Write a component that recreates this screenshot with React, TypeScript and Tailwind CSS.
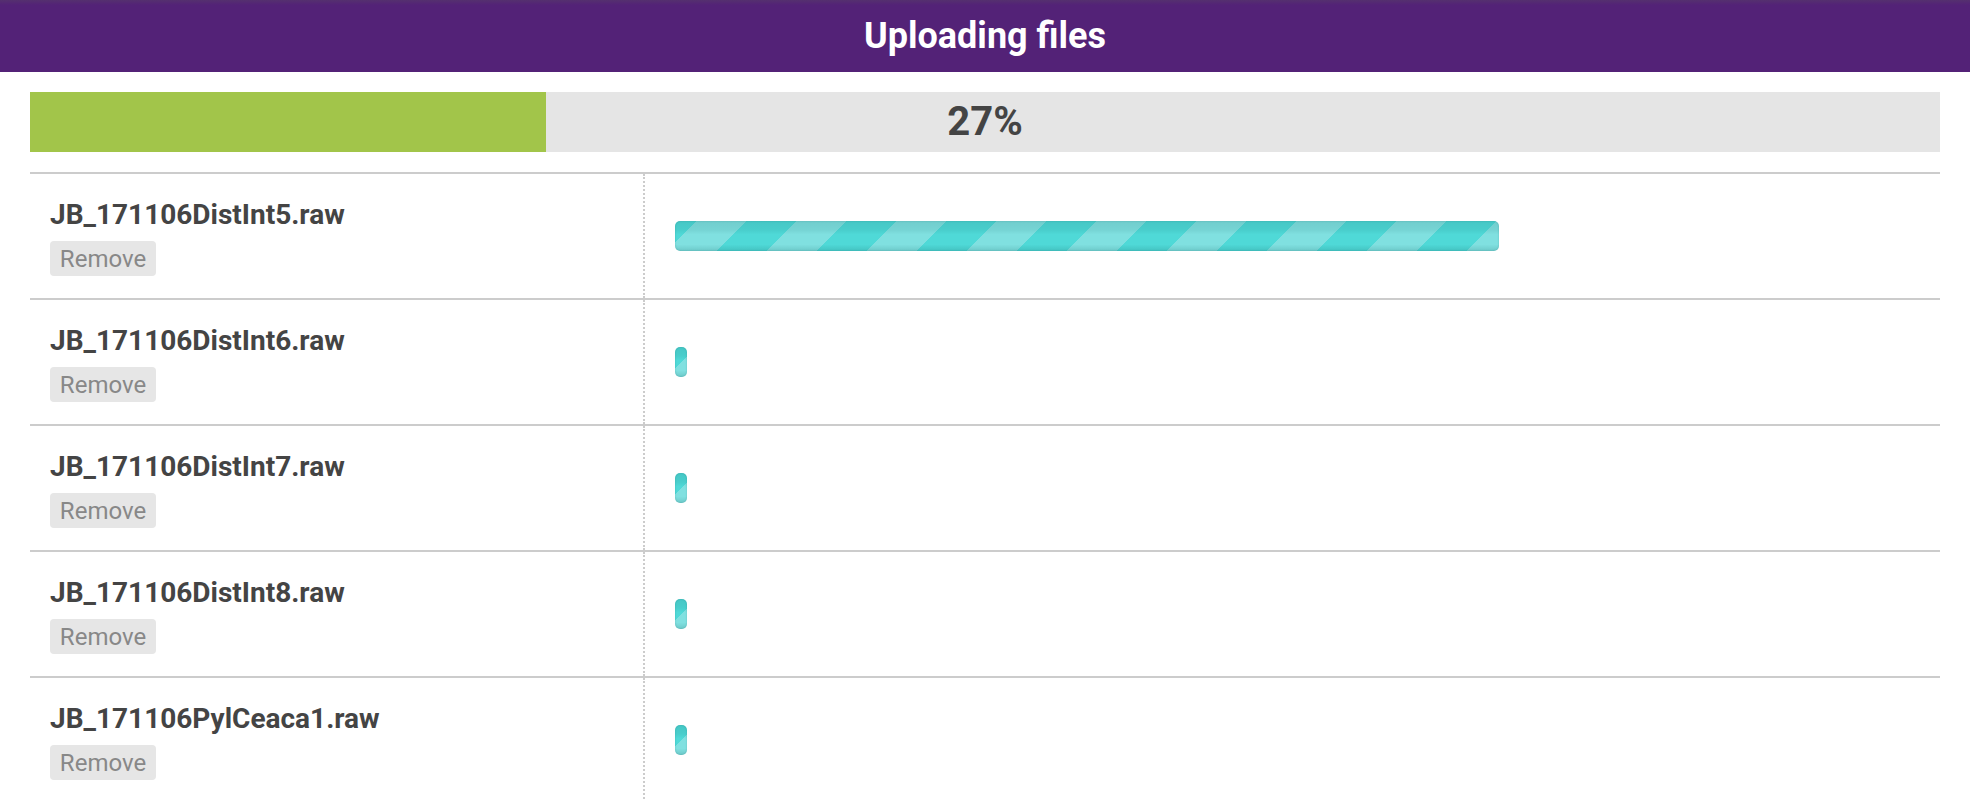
import React from "react";

const files = [
  { name: "JB_171106DistInt5.raw", progress: 66.7 },
  { name: "JB_171106DistInt6.raw", progress: 0 },
  { name: "JB_171106DistInt7.raw", progress: 0 },
  { name: "JB_171106DistInt8.raw", progress: 0 },
  { name: "JB_171106PylCeaca1.raw", progress: 0 },
];

function StripedBar({ progress }: { progress: number }) {
  const width = progress > 0 ? `${progress}%` : "12px";
  return (
    <div
      className="h-[30px] rounded-[5px] shadow-[inset_0_0_2px_rgba(0,80,80,0.25)] bg-[linear-gradient(to_bottom,rgba(0,70,70,0.12)_0%,rgba(0,70,70,0.08)_30%,rgba(255,255,255,0)_45%,rgba(255,255,255,0)_78%,rgba(0,70,70,0.15)_100%),repeating-linear-gradient(135deg,#4fd9d7_0px,#4fd9d7_15.5px,#80e0e0_15.5px,#80e0e0_50.85px,#4fd9d7_50.85px,#4fd9d7_70.71px)]"
      style={{ width }}
    />
  );
}

export default function App() {
  return (
    <div className="min-h-screen bg-white font-['Roboto',_'Liberation_Sans',_sans-serif]">
      <div className="h-[72px] flex items-center justify-center bg-[linear-gradient(to_bottom,#55306f_0px,#532277_5px,#532277_100%)]">
        <h1 className="text-[36px] leading-none font-bold text-white">Uploading files</h1>
      </div>

      <div className="mx-[30px] mt-[20px] relative h-[60px] bg-[#e5e5e5]">
        <div className="h-full bg-[#a2c54a]" style={{ width: "27%" }} />
        <div className="absolute inset-0 flex items-center justify-center text-[40px] font-bold text-[#444444] leading-none">
          27%
        </div>
      </div>

      <div className="mx-[30px] mt-[20px] border-t-2 border-[#cccccc]">
        {files.map((f) => (
          <div key={f.name} className="flex border-b-2 border-[#cccccc] h-[126px]">
            <div className="w-[615px] shrink-0 border-r-2 border-dotted border-[#cccccc] pl-[20px] pt-[25px]">
              <div className="text-[28px] leading-[32px] font-bold text-[#444444]">{f.name}</div>
              <div className="mt-[10px] w-[106px] h-[35px] rounded-[4px] bg-[#e6e6e6] flex items-center justify-center text-[24px] text-[#888888]">
                Remove
              </div>
            </div>
            <div className="flex-1 flex items-center pl-[30px] pr-[30px]">
              <div className="w-full">
                <StripedBar progress={f.progress} />
              </div>
            </div>
          </div>
        ))}
      </div>
    </div>
  );
}
